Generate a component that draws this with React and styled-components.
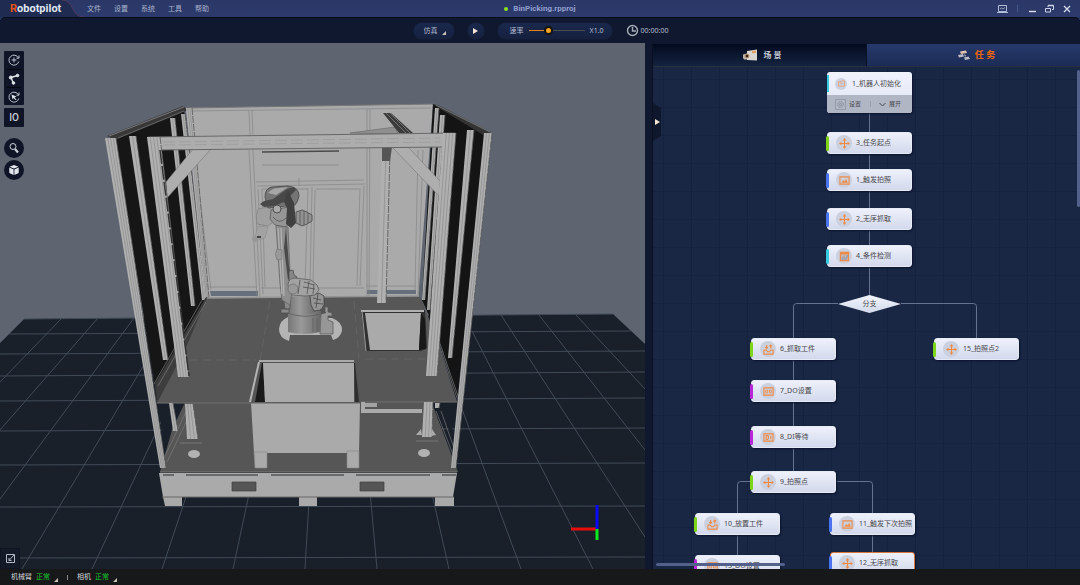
import {useState} from 'react'
import styled, {createGlobalStyle} from 'styled-components'

const GlobalStyle = createGlobalStyle`
  * {
    box-sizing: border-box;
  }

  body {
    margin: 0;
    background-color: #10182f;
    font-family: "Noto Sans", "Noto Sans CJK SC", sans-serif;
    font-size: 7px;
    line-height: 10px;
    color: #b4bdd0;
  }

  button, select, input {
    font: inherit;
    color: inherit;
    margin: 0;
    padding: 0;
    border: none;
    background: none;
  }
`

const Page = styled.div`
  display: flex;
  flex-direction: column;
  height: 100vh;
  overflow: hidden;
`

/* ---------- title bar ---------- */

const TitleBar = styled.header`
  display: grid;
  grid-template-columns: 1fr auto 1fr;
  align-items: center;
  height: 17px;
  background: linear-gradient(#2a3767, #2d3b6c);
`

const TitleLeft = styled.div`
  display: flex;
  align-items: center;
`

const Logo = styled.div`
  position: relative;
  width: 87px;
  height: 17px;
  padding-left: 10px;
  font-family: Roboto, sans-serif;
  font-size: 11px;
  line-height: 18px;
  font-weight: bold;
  color: #dfe5f3;

  & > svg {
    position: absolute;
    left: 0;
    top: 0;
  }

  & > span {
    position: relative;
  }

  & em {
    font-style: normal;
    color: #e4551c;
  }
`

const Menu = styled.nav`
  display: flex;
  gap: 13px;

  & > button {
    color: #aab3cc;
  }
`

const FileName = styled.h1`
  display: flex;
  align-items: center;
  gap: 5px;
  margin: 0;
  font-family: Roboto, sans-serif;
  font-size: 8px;
  line-height: 16px;
  font-weight: bold;
  color: #929fce;

  &::before {
    content: '';
    width: 4px;
    height: 4px;
    border-radius: 50%;
    background-color: #8be41a;
  }
`

const WindowButtons = styled.div`
  display: flex;
  justify-content: flex-end;
  align-items: center;
  gap: 6px;
  padding-right: 8px;

  & > button {
    display: flex;
    width: 11px;
    height: 11px;
  }

  & > span {
    width: 1px;
    height: 7px;
    margin: 0 3px;
    background-color: #46558a;
  }
`

/* ---------- toolbar ---------- */

const Toolbar = styled.div`
  display: flex;
  justify-content: center;
  align-items: center;
  gap: 14px;
  height: 26px;
  padding-left: 2px;
  background-color: #10182f;
  border-top: 1px solid #080d1c;
  border-radius: 5px 5px 0 0;
  box-shadow: 0 -3px 0 #2d3b6c;
`

const pill = `
  height: 16px;
  border-radius: 8px;
  background: linear-gradient(#19284c, #16203f);
  box-shadow: 0 0 1px #27406e;
`

const ModePill = styled.label`
  ${pill}
  position: relative;
  width: 40px;

  & > select {
    width: 100%;
    height: 16px;
    padding-left: 10px;
    appearance: none;
    outline: none;
  }

  & > svg {
    position: absolute;
    right: 8px;
    bottom: 4px;
    pointer-events: none;
  }
`

const PlayButton = styled.button`
  ${pill}
  display: flex;
  justify-content: center;
  align-items: center;
  width: 16px;
`

const RatePill = styled.div`
  ${pill}
  display: flex;
  align-items: center;
  gap: 5px;
  width: 114px;
  padding-left: 12px;
`

const RateSlider = styled.input`
  width: 56px;
  height: 10px;
  appearance: none;

  &::-webkit-slider-runnable-track {
    height: 1px;
    background: linear-gradient(to right, #e0801f 34%, #4b4c50 34%);
  }

  &::-webkit-slider-thumb {
    appearance: none;
    width: 9px;
    height: 9px;
    margin-top: -4px;
    border: 2px solid #15130f;
    border-radius: 50%;
    background-color: #f5a623;
  }
`

const Timer = styled.time`
  display: flex;
  align-items: center;
  gap: 2px;
`

/* ---------- main area ---------- */

const Main = styled.main`
  display: grid;
  grid-template-columns: minmax(0, 1fr) 428px;
  gap: 7px;
  flex: 1;
  min-height: 0;
`

const Viewport = styled.section`
  position: relative;
  min-height: 0;
  overflow: hidden;
  background-color: #5e6570;
`

const Scene = styled.svg`
  display: block;
  width: 100%;
  height: 100%;
`

const ViewTools = styled.div`
  position: absolute;
  left: 4px;
  top: 8px;
  display: flex;
  flex-direction: column;
`

const ToolGroup = styled.div`
  display: flex;
  flex-direction: column;
  padding: 0 3px;
  border-radius: 1px;
  background-color: #0f1526;

  & > button {
    display: flex;
    justify-content: center;
    align-items: center;
    height: 18px;
  }

  & > button + button {
    border-top: 1px solid #05080f;
  }
`

const IoButton = styled.button`
  width: 20px;
  height: 19px;
  margin: 3px 0 11px;
  border-radius: 1px;
  background-color: #0f1526;
  font-family: Roboto, sans-serif;
  font-size: 10px;
  font-weight: 500;
  color: #c9ced8;
`

const RoundTool = styled.button`
  display: flex;
  justify-content: center;
  align-items: center;
  width: 20px;
  height: 20px;
  margin-bottom: 2px;
  border-radius: 50%;
  background-color: #0f1526;
`

const PopOut = styled.button`
  position: absolute;
  left: 0;
  bottom: 0;
  display: flex;
  justify-content: center;
  align-items: center;
  width: 20px;
  height: 21px;
  border: 1px solid #101521;
  background-color: #141a28;
`

/* ---------- task panel ---------- */

const Panel = styled.section`
  display: flex;
  flex-direction: column;
  min-height: 0;
  padding-top: 1px;
  border-left: 1px solid #0a1020;
`

const Tabs = styled.div`
  display: flex;
  height: 23px;
`

const Tab = styled.button`
  display: flex;
  justify-content: center;
  align-items: center;
  gap: 5px;
  flex: 1;
  padding-left: 6px;
  border-right: 1px solid #0a1226;
  border-bottom: 1px solid #27313e;
  background: ${p => p.$active ? 'linear-gradient(#26396b, #1c2c57)' : 'linear-gradient(#030a1f, #14233f)'};
  font-size: ${p => p.$active ? '9px' : '8px'};
  font-weight: bold;
  color: ${p => p.$active ? '#f2670c' : '#c2c8d2'};

  &:last-child {
    border-right: none;
  }
`

const Canvas = styled.div`
  position: relative;
  flex: 1;
  min-height: 0;
  overflow: hidden;
  background-color: #192745;
  background-image: linear-gradient(#15223f 1px, transparent 1px),
  linear-gradient(to right, #15223f 1px, transparent 1px);
  background-size: 28px 28px;
  background-position: 10px 12px;
`

const Wires = styled.svg`
  position: absolute;
  inset: 0;
  width: 100%;
  height: 100%;
  fill: none;
  stroke: #66738f;
`

const Card = styled.button`
  position: absolute;
  left: ${p => p.$x}px;
  top: ${p => p.$y}px;
  display: flex;
  align-items: center;
  gap: 4px;
  width: 85px;
  height: 22px;
  padding-left: 8px;
  border-radius: 3px;
  border: 1px solid ${p => p.$selected ? '#d9763a' : '#e6eaf5'};
  background: linear-gradient(#eef1fb, #d3d9ec);
  box-shadow: 1px 1px 2px #0b142a;
  color: #47474c;
  white-space: nowrap;

  &::before {
    content: '';
    position: absolute;
    left: -2px;
    top: 3px;
    width: 3px;
    height: 15px;
    border-radius: 2px;
    background-color: ${p => p.$color};
  }
`

const Badge = styled.span`
  display: flex;
  justify-content: center;
  align-items: center;
  flex: none;
  width: ${p => p.$small ? '12px' : '16px'};
  height: ${p => p.$small ? '12px' : '16px'};
  border-radius: 50%;
  background-color: #cbd0de;
`

const OpenCard = styled.div`
  position: absolute;
  left: 174px;
  top: 5px;
  width: 85px;
  overflow: hidden;
  border-radius: 3px;
  background: linear-gradient(#f0f3fc, #dfe4f3);
  box-shadow: 1px 1px 2px #0b142a;
  color: #47474c;
`

const OpenHead = styled.div`
  display: flex;
  align-items: center;
  gap: 5px;
  height: 23px;
  padding-left: 6px;
  border-left: 2px solid #36cbe0;
  border-image: linear-gradient(transparent 18%, #36cbe0 18%, #36cbe0 82%, transparent 82%) 1;
`

const OpenFoot = styled.div`
  display: flex;
  align-items: center;
  justify-content: space-between;
  height: 18px;
  padding: 0 11px 0 8px;
  background-color: #b1b6c5;
  font-size: 6px;

  & > button {
    display: flex;
    align-items: center;
    gap: 3px;
  }

  & > span {
    width: 1px;
    height: 6px;
    background-color: #9aa0b0;
  }
`

const Branch = styled.div`
  position: absolute;
  left: 185px;
  top: 228px;
  width: 63px;
  height: 18px;
  clip-path: polygon(50% 0, 100% 50%, 50% 100%, 0 50%);
  background: linear-gradient(#f2f5fd, #d3d9ec);
  line-height: 17px;
  text-align: center;
  color: #47474c;
`

const Collapse = styled.button`
  position: absolute;
  left: 0;
  top: 36px;
  display: flex;
  align-items: center;
  width: 8px;
  height: 38px;
  padding-left: 2px;
  clip-path: polygon(0 0, 100% 14%, 100% 86%, 0 100%);
  background-color: #0f172c;
`

const Thumb = styled.div`
  position: absolute;
  border-radius: 2px;
  background-color: #53608c;
  ${p => p.$vertical ? 'right: 0; top: 3px; width: 3px; height: 137px;' : 'left: 3px; bottom: 3px; width: 129px; height: 3px;'}
`

/* ---------- status bar ---------- */

const StatusBar = styled.footer`
  display: flex;
  align-items: center;
  gap: 9px;
  height: 16px;
  padding-left: 11px;
  background-color: #17181a;
  color: #d3d5d8;

  & > span {
    width: 1px;
    height: 5px;
    background-color: #85878a;
  }
`

const StatusItem = styled.button`
  display: flex;
  align-items: center;
  gap: 4px;

  & > b {
    font-weight: normal;
    color: #14c22e;
  }

  & > svg {
    align-self: flex-end;
  }
`

/* ---------- icons ---------- */

const Corner = () => (
    <svg width="4" height="4" viewBox="0 0 4 4"><path d="M4 0v4H0z" fill="#c9c2b8"/></svg>
)

const Arrow = () => (
    <svg width="5" height="6" viewBox="0 0 5 6"><path d="M0 0l5 3-5 3z" fill="#f6e4d4"/></svg>
)

const glyphs = {
    move: (
        <g>
            <path d="M6 2v8M2 6h8" strokeWidth="1.2"/>
            <path d="M6 0l2 2.6H4zM6 12L4 9.4h4zM0 6l2.6-2v4zM12 6L9.4 8V4z" fill="#ef8a45" stroke="none"/>
        </g>
    ),
    photo: (
        <g>
            <path d="M1 2h10v8H1z"/>
            <path d="M2.5 8.5l2.4-3 1.6 1.6 1.2-3 2 4.4z" fill="#ef8a45" stroke="none"/>
        </g>
    ),
    check: (
        <g>
            <path d="M1.5 1.5h9v9h-9z" fill="#c9b0a6"/>
            <path d="M1.500 2.500h9" strokeWidth="2"/>
            <path d="M3.500 9.500V7M5.500 9.500V6M7 9.500l2.500-5" stroke="#8f9fb8" strokeWidth="1.400"/>
        </g>
    ),
    grip: (
        <g>
            <path d="M1 6v5h10V6M1.500 6.500h2l1.500 2h2l1.500-2h2M4 1v4M2.500 3.500L4 5l1.500-1.500M8.500 1v4M7 2.500L8.500 1 10 2.500"/>
        </g>
    ),
    dout: (
        <g>
            <path d="M1 2h10v8H1z"/>
            <path d="M3 4.500h2v3H3zM7 4.500h2v3H7z" strokeWidth="0.900"/>
        </g>
    ),
    din: (
        <g>
            <path d="M1 2h10v8H1z"/>
            <path d="M3.500 4h1.500q1 0 1 2t-1 2H3.500zM8.500 4v4"/>
        </g>
    ),
    init: (
        <g opacity="0.6">
            <path d="M2 3.500h3l1-1h4v7H2zM4 5.500h4"/>
        </g>
    ),
}

const Glyph = ({name, size = 11}) => (
    <svg width={size} height={size} viewBox="0 0 12 12" fill="none" stroke="#ef8a45" strokeWidth="1.2">
        {glyphs[name]}
    </svg>
)

/* ---------- 3d scene ---------- */

const floorRows = [[319, 314], [334, 331], [354, 351], [376, 372], [401, 398], [431, 428], [465, 463], [507, 506], [558, 557]]

const floorColumns = [
    [24, 319, 0, 343], [61, 319, 0, 382], [98, 318, 0, 430], [134, 318, 0, 499], [172, 318, 22, 569],
    [175, 392, 92, 569], [190, 485, 162, 569], [252, 480, 233, 569], [309, 500, 305, 569], [369, 480, 377, 569],
    [430, 485, 449, 569], [455, 390, 521, 569], [472, 331, 593, 569], [501, 315, 645, 537], [539, 315, 645, 450],
    [576, 315, 645, 389],
]

// aluminium profile: an outline and the grooves that run along it
const Post = ({top: [a, b, y1], bottom: [c, d, y2], grooves = 2}) => (
    <g>
        <path d={`M${a} ${y1}H${b}L${d} ${y2}H${c}z`} fill="#b0b0b0"/>
        {Array.from({length: grooves}, (_, i) => {
            const t = (i + 1) / (grooves + 1)
            return (
                <path key={i} d={`M${a + (b - a) * t} ${y1}L${c + (d - c) * t} ${y2}`} stroke="#858585" strokeWidth="0.6"/>
            )
        })}
        <path d={`M${b} ${y1}L${d} ${y2}`} stroke="#555" strokeWidth="0.8" strokeDasharray="7 1"/>
    </g>
)

const RobotArm = () => (
    <g>
        <path d="M279 329Q280 320 288 317L332 318Q343 322 342 331Q340 338 333 340L331 335H290L289 341Q279 338 279 329z" fill="#b4b4b4"/>

        {/* base */}
        <path d="M321 314l4-1v-6h3v5l4 1v3h-4v4l5 2v12h-13z" fill="#979797" stroke="#555" strokeWidth="0.7"/>
        <path d="M288 311Q304 305 321 311L320 332Q304 336 288 332z" fill="url(#metal)"/>
        <path d="M290 297L313 295L316 312Q302 318 289 312z" fill="url(#metal)"/>
        <path d="M288 313q16 6 32 1M313 318v14M317 318v14" stroke="#5e5e5e" strokeWidth="0.8" fill="none"/>
        <path d="M281 309h8v4h-8zM284 302l6-2v9h-5z" fill="#888" stroke="#4f4f4f" strokeWidth="0.7"/>
        <path d="M310 296l9-3 5 3v9l-3 5-7 1-3-6z" fill="#949494" stroke="#444" strokeWidth="0.8"/>
        <path d="M313 298l8 2M314 303l9 1M318 294l-2 14M320 309l6 4" stroke="#4a4a4a" strokeWidth="0.8"/>

        {/* lower arm */}
        <path d="M276 225l12 2 2 45 4 7-4 26-8-5-2-16z" fill="#8e8e8e" stroke="#606060" strokeWidth="0.7"/>
        <path d="M278 228l4 66M281 228l3 68" stroke="#b4b4b4" strokeWidth="1.2"/>
        <path d="M286 227l3 39 2 9-3 5-4-32z" fill="#4a4a4a"/>
        <path d="M277 249q-3 5 0 11l5-1v-9z" fill="#9a9a9a" stroke="#707070" strokeWidth="0.6"/>
        <path d="M289 271l4-1 1 5 3 2-2 5-6-1z" fill="#888" stroke="#444" strokeWidth="0.7"/>
        <path d="M288 284q1-6 7-6l16 2 6 5 2 5-4 5-10 1-13-1q-5-5-4-11z" fill="#a2a2a2" stroke="#5c5c5c" strokeWidth="0.8"/>
        <circle cx="293" cy="289" r="5" fill="#999" stroke="#666" strokeWidth="0.6"/>
        <path d="M300 280l-2 14M304 282l10 3M303 287l12 2M309 281l-2 13M314 284l-1 10" stroke="#505050" strokeWidth="0.8" fill="none"/>

        {/* tool flange */}
        <path d="M258 226l10 1-3 11-7 2-3-3z" fill="#a2a2a2" stroke="#888" strokeWidth="0.5"/>
        <circle cx="255" cy="239" r="3" fill="#989898"/>
        <path d="M257 236h4v2h-4z" fill="#444"/>
        <path d="M258 209l10-2 5 4-1 12-4 3-11-2q-2-8 1-15z" fill="#a0a0a0" stroke="#808080" strokeWidth="0.7"/>

        {/* upper arm */}
        <path d="M271 210l18-3 3 12-6 8-11-2-5-6z" fill="#969696" stroke="#555" strokeWidth="0.7"/>
        <path d="M265 197q0-9 7-10l16-1q11 1 11 10-1 6-4 9l-27 3z" fill="#757575" stroke="#464646" strokeWidth="0.8"/>
        <path d="M268 193q4-5 11-5l9-1-12 8z" fill="#a6a6a6"/>
        <path d="M260 204l4-3 9-2 14-10 7-2 2 3-12 12-9 4-11 1z" fill="#484848"/>
        <path d="M288 191l6 12 2 20-5 5-5-4 1-16-3-6z" fill="#404040"/>
        <circle cx="277" cy="209" r="4" fill="#aaa" stroke="#444" strokeWidth="0.9"/>
        <path d="M273 217q6 8 13 1" stroke="#555" strokeWidth="0.8" fill="none"/>
        <path d="M296 212l6-2 5 2 5 3v6l-5 3-5 2-6-3z" fill="#929292" stroke="#474747" strokeWidth="0.8"/>
        <path d="M300 211v14M304 211v14M308 213v10" stroke="#555" strokeWidth="0.8"/>
    </g>
)

const CellScene = () => (
    <Scene viewBox="0 43 645 526" preserveAspectRatio="xMidYMid slice" role="img" aria-label="BinPicking">
        <defs>
            <linearGradient id="metal">
                <stop offset="0" stopColor="#777"/>
                <stop offset="0.4" stopColor="#9a9a9a"/>
                <stop offset="1" stopColor="#676767"/>
            </linearGradient>
        </defs>

        {/* floor */}
        <path d="M24 319L613 314L645 344V569H0V343z" fill="#1a202a"/>
        <g stroke="#414b57">
            {floorRows.map(([l, r]) => <path key={l} d={`M${l === 319 ? 24 : l === 334 ? 9 : 0} ${l}L${r === 314 ? 613 : r === 331 ? 631 : 645} ${r}`}/>)}
            {floorColumns.map(([x1, y1, x2, y2]) => <path key={x1} d={`M${x1} ${y1}L${x2} ${y2}`}/>)}
        </g>

        {/* back wall */}
        <path d="M186 108L433 104L418 300H207z" fill="#aaa"/>
        <path d="M210 291h48v5h-47zM367 290h49v4h-49z" fill="#66707c"/>
        <g stroke="#858585" strokeWidth="0.700" fill="none">
            <path d="M190 111L431 108M249 110l1 26M252 110l1 26M367 109v187M370 109l-1 187M249 150l8 148M253 150l7 148"/>
            <path d="M194 150l17 140M209 287h48M261 288h103M366 286h50M256 182l108-2M257 186l108-2M262 165h77"/>
            <path d="M299 178v8M258 189l5 105M262 189l3 98M308 188l-3 98M312 187l-2 99M315 190l-2 96M360 188l-3 98M364 186l-4 100M316 189h43M262 189h46"/>
            <path d="M418 150l-3 140M423 150l-5 145"/>
        </g>
        <path d="M262 152l77-1" stroke="#4a4a4a" strokeWidth="1.500"/>
        <path d="M186 108L433 104" stroke="#777"/>

        {/* left wall */}
        <path d="M115 139L184 110L207 297L155 385z" fill="#161616"/>
        <path d="M107 136L183 106L188 110L115 140z" fill="#383838"/>
        <path d="M109 136L184 107" stroke="#8a8a8a" strokeWidth="0.800"/>
        <path d="M118 138L184 111" stroke="#777" strokeWidth="0.700"/>
        <Post top={[129, 136, 136]} bottom={[163, 168, 360]} grooves={1}/>
        <Post top={[170, 175, 118]} bottom={[191, 195, 306]} grooves={1}/>
        <Post top={[181, 185, 114]} bottom={[202, 206, 300]} grooves={1}/>
        <Post top={[186, 192, 108]} bottom={[205, 209, 298]} grooves={2}/>

        {/* right wall */}
        <path d="M433 104L486 133L457 400L440 340L422 300z" fill="#141414"/>
        <Post top={[435, 439, 108]} bottom={[422, 425, 300]} grooves={1}/>
        <Post top={[440, 445, 115]} bottom={[427, 430, 310]} grooves={1}/>
        <Post top={[467, 474, 130]} bottom={[448, 452, 358]} grooves={1}/>
        <path d="M432 104L438 105L491 132L485 136z" fill="#333"/>
        <path d="M436 105L490 132" stroke="#888" strokeWidth="0.800"/>

        {/* deck and lower floor */}
        <path d="M187 398H430L458 472H160L172 430z" fill="#565656"/>
        <path d="M159 403h13l4 12-12 38z" fill="#1a202a"/>
        <path d="M441 402h14l-4 35z" fill="#1a202a"/>
        <path d="M206 297L155 384L157 403H184L210 298z" fill="#3d3d3d"/>
        <path d="M420 296L457 402H445L425 340z" fill="#444"/>
        <path d="M207 298L419 296L434 330L457 402L157 403L184 352z" fill="#575757"/>
        <path d="M157 403h94M361 402h96" stroke="#707070"/>
        <path d="M154 384l48-84M158 386l48-84M164 458l22-46M167 462l22-46" stroke="#7b7b7b" strokeWidth="0.700"/>
        <path d="M207 298l212-2" stroke="#939393" strokeWidth="1.500"/>
        <path d="M190 360h66M365 359h68M270 301l-10 60M354 301l5 57" stroke="#6c6c6c" strokeWidth="0.600" strokeDasharray="8 5"/>
        <path d="M434 330l23 68M438 338l20 58M436 411l18 46M441 411l14 40" stroke="#777" strokeWidth="0.700"/>

        {/* rear bin */}
        <path d="M361 310h64l2 38-6 3h-55z" fill="#303030"/>
        <path d="M361 311h63" stroke="#b0b0b0" strokeWidth="2"/>
        <path d="M362 311l4 40" stroke="#999"/>
        <path d="M365 313h56l-2 37h-49z" fill="#aaa"/>
        <path d="M421 313l-2 37 7-1-1-30z" fill="#181818"/>

        {/* lower frame */}
        <path d="M361 402v11h61v-4h-57v-7z" fill="#aaa"/>
        <path d="M365 403h12v4h-12z" fill="#a2a2a2"/>

        <Post top={[382, 390, 150]} bottom={[377, 386, 303]} grooves={1}/>
        <path d="M382 147h10l-2 14h-8z" fill="#555"/>
        <path d="M350 133l45-6 3 7z" fill="#8f8f8f" stroke="#666" strokeWidth="0.600"/>
        <path d="M383 113h8l22 20h-14z" fill="#3b3b3b"/>
        <path d="M386 113l20 20M390 113l20 20" stroke="#888" strokeWidth="0.700"/>

        {/* gate */}
        <path d="M166 182L193 149H211L167 198z" fill="#aeaeae" stroke="#777" strokeWidth="0.600"/>
        <path d="M392 147H408L440 181L439 196z" fill="#aeaeae" stroke="#777" strokeWidth="0.600"/>
        <path d="M147 137L455 133V147L158 150z" fill="#adadad"/>
        <path d="M148 137L455 133M161 150L443 147" stroke="#606060" strokeWidth="0.900"/>
        <path d="M163 142L440 138M163 145L440 142" stroke="#959595" strokeWidth="0.600" strokeDasharray="12 4"/>
        <Post top={[147, 160, 137]} bottom={[178, 189, 377]} grooves={3}/>
        <Post top={[443, 456, 133]} bottom={[426, 437, 376]} grooves={3}/>
        <path d="M160 150l29 226" stroke="#333" strokeWidth="1.500" strokeDasharray="14 2"/>
        <Post top={[185, 193, 404]} bottom={[187, 198, 439]} grooves={2}/>
        <Post top={[169, 173, 403]} bottom={[173, 178, 431]} grooves={1}/>
        <Post top={[424, 433, 402]} bottom={[422, 432, 437]} grooves={2}/>
        <path d="M416 435l5-6 1 6zM432 429l4 6-5 1z" fill="#aaa"/>
        <path d="M180 443h22M416 441h22" stroke="#777"/>
        <Post top={[435, 440, 403]} bottom={[435, 439, 408]} grooves={0}/>

        <RobotArm/>

        {/* front bin */}
        <path d="M256 361H356L360 403H251z" fill="#555"/>
        <path d="M259 361h95" stroke="#aaa" strokeWidth="2"/>
        <path d="M259 362L250 402" stroke="#b4b4b4" strokeWidth="2"/>
        <path d="M262 363L255 402H265L263 363z" fill="#1a1a1a"/>
        <path d="M354 363l1 39h4l-4-39z" fill="#2e2e2e"/>
        <path d="M263 363H354V402H265z" fill="#aaa"/>
        <path d="M251 403H360L359 453H254z" fill="#aaa"/>
        <path d="M251 403H360" stroke="#666"/>
        <path d="M254 452h13v16h-12zM347 451h12v17h-12z" fill="#aaa" stroke="#888" strokeWidth="0.600"/>
        <ellipse cx="194" cy="454" rx="6" ry="4" fill="#b2b2b2"/>
        <ellipse cx="424" cy="453" rx="6" ry="4" fill="#b2b2b2"/>

        {/* outer posts */}
        <Post top={[105, 116, 138]} bottom={[160, 166, 468]} grooves={3}/>
        <Post top={[484, 492, 133]} bottom={[451, 456, 468]} grooves={2}/>

        {/* pallet */}
        <path d="M159 473H457L453 497H163z" fill="#aaa"/>
        <path d="M160 472h297" stroke="#777"/>
        <path d="M163 475h11M186 475h72M271 475h73M356 475h74M442 475h14" stroke="#555" strokeWidth="1.500"/>
        <path d="M232 482h24v9h-24zM360 482h24v9h-24z" fill="#555" stroke="#404040" strokeWidth="0.700"/>
        <path d="M163 497h19v9h-17zM299 497h18v9h-18zM435 497h19v9h-19z" fill="#a9a9a9"/>
        <path d="M162 497H454" stroke="#686868"/>

        <g strokeWidth="3">
            <path d="M571 529h25" stroke="#e80c0c"/>
            <path d="M597 505v24" stroke="#0a0af5"/>
            <path d="M597 529v11" stroke="#0bea1a"/>
        </g>
    </Scene>
)

/* ---------- data ---------- */

const menu = ['文件', '设置', '系统', '工具', '帮助']

const GREEN = '#7fd41a'
const BLUE = '#4a73f0'
const CYAN = '#36cbe0'
const PURPLE = '#b826d8'

const nodes = [
    {label: '3_任务起点', icon: 'move', color: GREEN, x: 174, y: 65},
    {label: '1_触发拍照', icon: 'photo', color: BLUE, x: 174, y: 102},
    {label: '2_无序抓取', icon: 'move', color: BLUE, x: 174, y: 141},
    {label: '4_条件检测', icon: 'check', color: CYAN, x: 174, y: 178},
    {label: '6_抓取工件', icon: 'grip', color: GREEN, x: 98, y: 271},
    {label: '15_拍照点2', icon: 'move', color: GREEN, x: 281, y: 271},
    {label: '7_DO设置', icon: 'dout', color: PURPLE, x: 98, y: 313},
    {label: '8_DI等待', icon: 'din', color: PURPLE, x: 98, y: 359},
    {label: '9_拍照点', icon: 'move', color: GREEN, x: 98, y: 404},
    {label: '10_放置工件', icon: 'grip', color: GREEN, x: 42, y: 446},
    {label: '11_触发下次拍照', icon: 'photo', color: BLUE, x: 177, y: 446},
    {label: '13_DO设置', icon: 'dout', color: PURPLE, x: 42, y: 488},
    {label: '12_无序抓取', icon: 'move', color: BLUE, x: 177, y: 485, selected: true},
]

const App = () => {
    const [rate, setRate] = useState(32)

    return (
        <Page>
            <GlobalStyle/>
            <TitleBar>
                <TitleLeft>
                    <Logo>
                        <svg width="87" height="17" viewBox="0 0 87 17">
                            <path d="M0 0H62C74 0 71 17 84 17H0z" fill="#1f2b50"/>
                            <path d="M62 0C74 0 71 17 84 17" fill="none" stroke="#5b3f5c" strokeWidth="0.8"/>
                        </svg>
                        <span><em>R</em>obotpilot</span>
                    </Logo>
                    <Menu>
                        {menu.map(item => <button key={item}>{item}</button>)}
                    </Menu>
                </TitleLeft>
                <FileName>BinPicking.rpproj</FileName>
                <WindowButtons>
                    <button aria-label="monitor">
                        <svg width="11" height="11" viewBox="0 0 11 11" fill="none" stroke="#b3bcd6">
                            <path d="M1.500 2.500h8v6h-8zM0 9.500h11"/>
                            <path d="M3 6l1.500-1L6 6l2-1.500" strokeWidth="0.8"/>
                        </svg>
                    </button>
                    <span/>
                    <button aria-label="minimize">
                        <svg width="11" height="11" viewBox="0 0 11 11"><path d="M2 8.500h7" stroke="#dde2f0" strokeWidth="1.400"/></svg>
                    </button>
                    <button aria-label="restore">
                        <svg width="11" height="11" viewBox="0 0 11 11" fill="none" stroke="#ccd3e6">
                            <path d="M4 4V2.500h5.500v4H8M1.500 5.500h5v3.500h-5z"/>
                            <path d="M4 2.500h5.500" strokeWidth="1.500"/>
                        </svg>
                    </button>
                    <button aria-label="close">
                        <svg width="11" height="11" viewBox="0 0 11 11"><path d="M3 3l6 6M9 3L3 9" stroke="#d5dbeb" strokeWidth="1.300"/></svg>
                    </button>
                </WindowButtons>
            </TitleBar>

            <Toolbar>
                <ModePill>
                    <select aria-label="模式">
                        <option>仿真</option>
                    </select>
                    <Corner/>
                </ModePill>
                <PlayButton aria-label="play"><Arrow/></PlayButton>
                <RatePill>
                    <label htmlFor="rate">速率</label>
                    <RateSlider id="rate" type="range" value={rate} onChange={e => setRate(e.target.value)}/>
                    <output htmlFor="rate">X1.0</output>
                </RatePill>
                <Timer>
                    <svg width="13" height="13" viewBox="0 0 13 13" fill="none" stroke="#a5aeb8" strokeWidth="1.400">
                        <circle cx="6.500" cy="6.500" r="5"/>
                        <path d="M6.500 3v4H10"/>
                    </svg>
                    00:00:00
                </Timer>
            </Toolbar>

            <Main>
                <Viewport>
                    <CellScene/>
                    <ViewTools>
                        <ToolGroup>
                            <button aria-label="rotate">
                                <svg width="12" height="12" viewBox="0 0 12 12" fill="none" stroke="#b9c0cc">
                                    <path d="M10.500 4A5 5 0 1 0 10.800 7.500M11 1.500V4.200H8.500M6 3.500v5M3.500 6h5"/>
                                </svg>
                            </button>
                            <button aria-label="joints">
                                <svg width="12" height="12" viewBox="0 0 12 12" fill="#dfe3ea" stroke="#dfe3ea">
                                    <path d="M9.500 2.500L3 4.500l2.500 6" fill="none" strokeWidth="1.400"/>
                                    <circle cx="9.500" cy="2.500" r="1.300"/>
                                    <circle cx="2.800" cy="4.500" r="1.500"/>
                                    <circle cx="5.500" cy="10" r="1.300"/>
                                </svg>
                            </button>
                            <button aria-label="cursor">
                                <svg width="12" height="12" viewBox="0 0 12 12" fill="none" stroke="#b9c0cc">
                                    <path d="M10.500 4A5 5 0 1 0 10.800 7.500M11 1.500V4.200H8.500"/>
                                    <path d="M3.500 3.500l5 2-2 1 2 2-1 .5-2-2-1 1.500z" fill="#dfe3ea" stroke="none"/>
                                </svg>
                            </button>
                        </ToolGroup>
                        <IoButton>IO</IoButton>
                        <RoundTool aria-label="zoom">
                            <svg width="12" height="12" viewBox="0 0 12 12" fill="none" stroke="#c9ced8">
                                <circle cx="5" cy="4.500" r="3"/>
                                <path d="M7 7l3 3.500" strokeWidth="2.200"/>
                            </svg>
                        </RoundTool>
                        <RoundTool aria-label="cube">
                            <svg width="12" height="12" viewBox="0 0 12 12" fill="#e3e6ec">
                                <path d="M6 1l4.500 1.800L6 4.600 1.500 2.800zM1.300 3.600L5.600 5.400V11L1.300 9zM10.700 3.600L6.400 5.400V11l4.300-2z"/>
                            </svg>
                        </RoundTool>
                    </ViewTools>
                    <PopOut aria-label="expand">
                        <svg width="11" height="11" viewBox="0 0 11 11" fill="none" stroke="#b3bac6">
                            <path d="M7 1.500H1.500v8h8V4M4 5v2.500h2.500M4 7.500L9 2M7 1.500h2.500V4"/>
                        </svg>
                    </PopOut>
                </Viewport>

                <Panel>
                    <Tabs role="tablist">
                        <Tab role="tab" aria-selected={false}>
                            <svg width="15" height="12" viewBox="0 0 15 12">
                                <path d="M4 2l10-1.500v11L4 11z" fill="#dad7d2"/>
                                <path d="M0 9V5.500l4-1v6H1z" fill="#b9b5b0"/>
                                <circle cx="4" cy="7" r="2" fill="#3a2a20" stroke="#c99a6c"/>
                                <path d="M9 2l4-.5V4L9 4.300z" fill="#e2a25e"/>
                            </svg>
                            场 景
                        </Tab>
                        <Tab role="tab" aria-selected $active>
                            <svg width="12" height="12" viewBox="0 0 12 12" fill="#b9bcc4">
                                <path d="M2 2.500L8 1.500 9 4 3 5z" fill="#e3c4b0"/>
                                <path d="M0 6l5-1 1 2.500L1 8.500zM6 5l2 1.500L7 8zM6 8.500L10.500 7.500 12 10 7 11z"/>
                            </svg>
                            任 务
                        </Tab>
                    </Tabs>
                    <Canvas>
                        <Wires>
                            <path d="M216.500 46V228M185 236.500H143.500Q140.500 236.500 140.500 239.500V410M248 236.500H320.500Q323.500 236.500 323.500 239.500V271"/>
                            <path d="M98 414.500H87.500Q84.500 414.500 84.500 417.500V490M183 414.500H216.500Q219.500 414.500 219.500 417.500V486"/>
                        </Wires>
                        <OpenCard>
                            <OpenHead>
                                <Badge $small><Glyph name="init" size={9}/></Badge>
                                1_机器人初始化
                            </OpenHead>
                            <OpenFoot>
                                <button>
                                    <svg width="11" height="11" viewBox="0 0 11 11" fill="none" stroke="#858b9b">
                                        <path d="M.5.500h10v10H.5z" stroke="#8c909c" strokeWidth="0.7"/>
                                        <circle cx="5.500" cy="5.500" r="2.800" strokeDasharray="1.500 0.7"/>
                                        <circle cx="5.500" cy="5.500" r="1"/>
                                    </svg>
                                    设置
                                </button>
                                <span/>
                                <button>
                                    <svg width="7" height="5" viewBox="0 0 7 5"><path d="M.5 1l3 3 3-3" fill="none" stroke="#44484f"/></svg>
                                    展开
                                </button>
                            </OpenFoot>
                        </OpenCard>
                        {nodes.map(n => (
                            <Card key={n.label} $x={n.x} $y={n.y} $color={n.color} $selected={n.selected}>
                                <Badge><Glyph name={n.icon}/></Badge>
                                {n.label}
                            </Card>
                        ))}
                        <Branch>分支</Branch>
                        <Collapse aria-label="collapse"><Arrow/></Collapse>
                        <Thumb $vertical/>
                        <Thumb/>
                    </Canvas>
                </Panel>
            </Main>

            <StatusBar>
                <StatusItem>机械臂 <b>正常</b> <Corner/></StatusItem>
                <span/>
                <StatusItem>相机 <b>正常</b> <Corner/></StatusItem>
            </StatusBar>
        </Page>
    )
}

export default App
